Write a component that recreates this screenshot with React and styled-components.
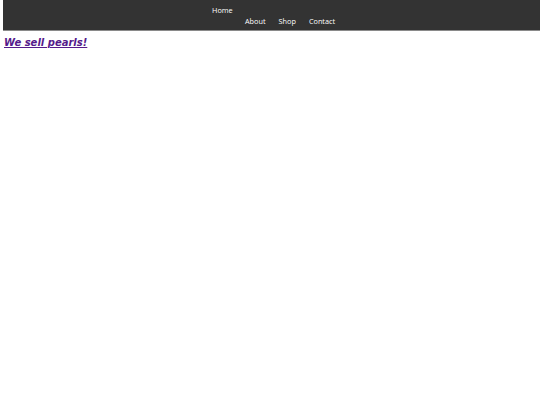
import styled, { createGlobalStyle } from "styled-components";

const Global = createGlobalStyle`
  html, body {
    margin: 0;
    padding: 0;
    background: #ffffff;
    font-family: "DejaVu Sans", sans-serif;
  }
`;

const links = ["About", "Shop", "Contact"];

export default function App() {
  return (
    <>
      <Global />
      <Header>
        <Nav>
          <HomeRow>
            <NavLink href="#">Home</NavLink>
          </HomeRow>
          <LinkRow>
            {links.map((l) => (
              <NavLink key={l} href="#">
                {l}
              </NavLink>
            ))}
          </LinkRow>
        </Nav>
      </Header>
      <Title href="#">We sell pearls!</Title>
    </>
  );
}

const Header = styled.header`
  margin-left: 3px;
  height: 31px;
  background-color: #333333;
  border-bottom: 1px solid #8a8a8a;
  box-sizing: border-box;
`;

const Nav = styled.nav`
  display: flex;
  flex-direction: column;
  padding-top: 5px;
  gap: 1px;
`;

const HomeRow = styled.div`
  display: flex;
  padding-left: 209px;
`;

const LinkRow = styled.div`
  display: flex;
  gap: 13px;
  padding-left: 242px;
`;

const NavLink = styled.a`
  color: #ffffff;
  font-family: "Open Sans", "DejaVu Sans", sans-serif;
  font-size: 7.3px;
  line-height: 10px;
  text-decoration: none;
`;

const Title = styled.a`
  display: inline-block;
  margin: 3px 0 0 4px;
  color: #551a8b;
  font-size: 10px;
  font-weight: bold;
  font-style: italic;
  text-decoration: underline;
`;
